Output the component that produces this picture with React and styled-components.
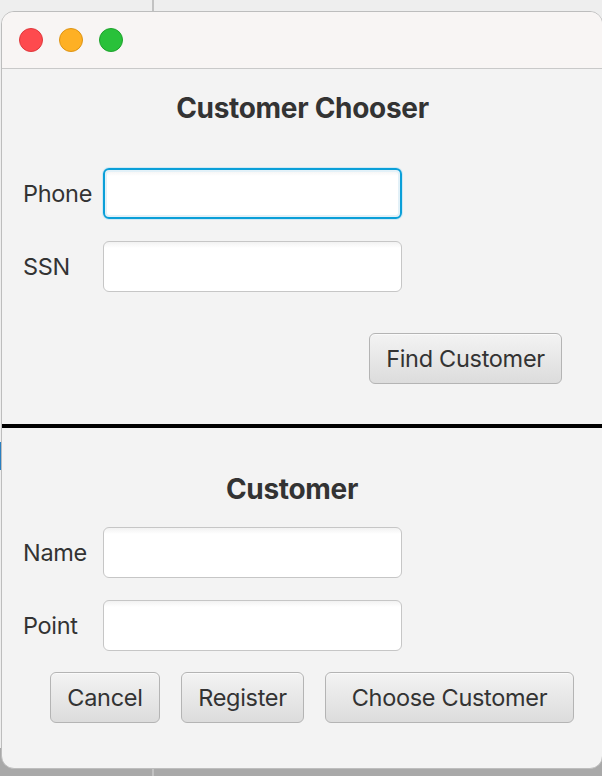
import React from 'react'
import styled, { createGlobalStyle } from 'styled-components'

const Global = createGlobalStyle`
  html, body {
    margin: 0;
    padding: 0;
    overflow: hidden;
  }
  body {
    font-family: Inter, "Liberation Sans", sans-serif;
    color: #333333;
  }
`

export default function App () {
  return (
    <>
      <Global />
      <Desktop>
        <Window>
          <TitleBar>
            <Light color='#fe4a4e' edge='#e0383c' />
            <Light color='#feb024' edge='#de9414' />
            <Light color='#29c13a' edge='#1ea22c' />
          </TitleBar>
          <Section>
            <Title>Customer Chooser</Title>
            <Fields>
              <Row>
                <Label>Phone</Label>
                <Input focused autoFocus />
              </Row>
              <Row>
                <Label>SSN</Label>
                <Input />
              </Row>
            </Fields>
            <FindBar>
              <Button width={193}>Find Customer</Button>
            </FindBar>
          </Section>
          <Divider />
          <Section bottom>
            <Title small>Customer</Title>
            <Fields tight>
              <Row>
                <Label>Name</Label>
                <Input />
              </Row>
              <Row>
                <Label>Point</Label>
                <Input />
              </Row>
            </Fields>
            <Actions>
              <Button width={110}>Cancel</Button>
              <Button width={123}>Register</Button>
              <Button width={249}>Choose Customer</Button>
            </Actions>
          </Section>
        </Window>
      </Desktop>
    </>
  )
}

const Desktop = styled.div`
  width: 602px;
  height: 776px;
  padding: 11px 0 0 1px;
  box-sizing: border-box;
  background:
    linear-gradient(to bottom, transparent 442px, #2a7fc0 442px, #2a7fc0 470px, transparent 470px) 0 0 / 2px 100% no-repeat,
    linear-gradient(to right, transparent 152px, #c2c2c2 152px, #c2c2c2 154px, transparent 154px),
    linear-gradient(to bottom, #eeeeee 0, #eeeeee 748px, #a9a9a9 748px, #a9a9a9 100%);
  overflow: hidden;
`
const Window = styled.div`
  width: 602px;
  height: 758px;
  box-sizing: border-box;
  border: 1px solid #bdbdbd;
  border-radius: 13px;
  background: #f3f3f3;
  overflow: hidden;
  display: flex;
  flex-direction: column;
`
const TitleBar = styled.div`
  height: 56px;
  flex-shrink: 0;
  display: flex;
  align-items: center;
  gap: 16px;
  padding-left: 17px;
  background: #f8f5f4;
  border-bottom: 1px solid #c9c9c9;
`
const Light = styled.span`
  width: 24px;
  height: 24px;
  border-radius: 50%;
  background: ${p => p.color};
  border: 1px solid ${p => p.edge};
  box-sizing: border-box;
`
const Section = styled.div`
  display: flex;
  flex-direction: column;
  padding: ${p => (p.bottom ? '46px 0 0 21px' : '24px 0 0 21px')};
  height: ${p => (p.bottom ? 'auto' : '355px')};
  box-sizing: border-box;
`
const Title = styled.h1`
  margin: 0;
  font-size: 28px;
  line-height: 30px;
  font-weight: 700;
  letter-spacing: -0.3px;
  text-align: center;
  padding-right: ${p => (p.small ? '41px' : '20px')};
  color: #333333;
`
const Fields = styled.div`
  display: flex;
  flex-direction: column;
  gap: 22px;
  margin-top: ${p => (p.tight ? '23px' : '45px')};
`
const Row = styled.div`
  display: flex;
  align-items: center;
`
const Label = styled.span`
  width: 80px;
  font-size: 23.5px;
  letter-spacing: -0.3px;
  color: #333333;
`
const Input = styled.input`
  width: 299px;
  height: 51px;
  box-sizing: border-box;
  border-radius: 6px;
  background: linear-gradient(to bottom, #f2f2f2 0, #ffffff 6px);
  border: ${p => (p.focused ? '2px solid #0a9fd8' : '1px solid #c6c6c6')};
  box-shadow: ${p => (p.focused ? '0 0 0 1px #cfe9f5, inset 0 0 0 2px #e3f1f8' : 'none')};
  outline: none;
  font-size: 20px;
  padding: 0 10px;
`
const FindBar = styled.div`
  display: flex;
  justify-content: flex-end;
  padding-right: 40px;
  margin-top: 41px;
`
const Button = styled.button`
  width: ${p => p.width}px;
  height: 51px;
  box-sizing: border-box;
  border: 1px solid #b4b4b4;
  border-radius: 6px;
  background: linear-gradient(to bottom, #f3f3f3, #dcdcdc);
  box-shadow: inset 0 1px 0 #fafafa;
  font-family: Inter, "Liberation Sans", sans-serif;
  font-size: 23.5px;
  letter-spacing: -0.3px;
  color: #333333;
  padding: 0;
`
const Divider = styled.div`
  height: 4px;
  background: #000000;
  flex-shrink: 0;
`
const Actions = styled.div`
  display: flex;
  gap: 21px;
  padding-left: 27px;
  margin-top: 21px;
`
